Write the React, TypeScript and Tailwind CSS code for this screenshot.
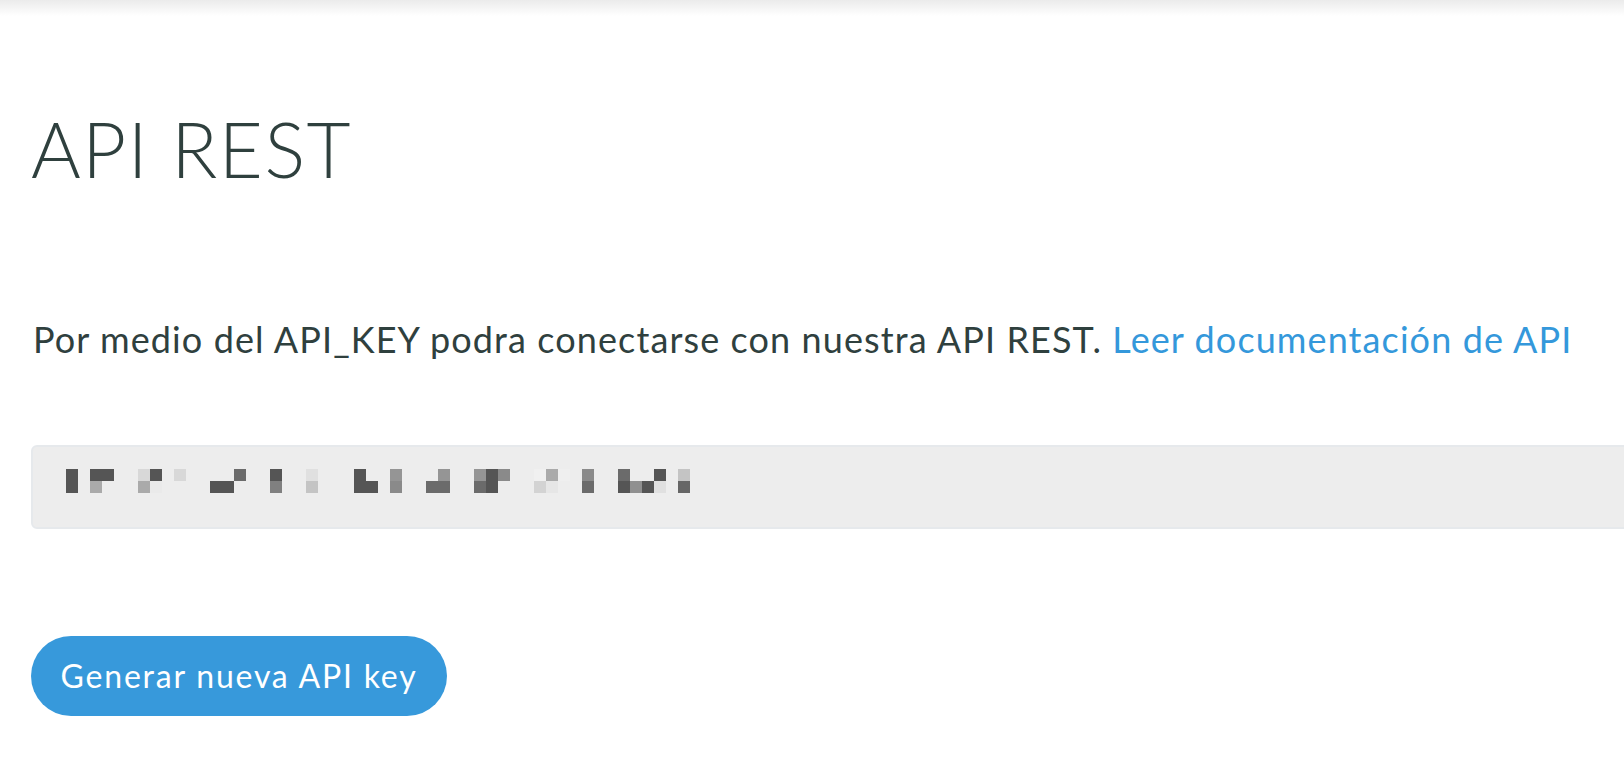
import React from 'react'

// blurred key: [column, row, colour]
const KEY_CELLS: [number, number, string][] = [
  [0, 0, '#555555'], [0, 1, '#555555'],
  [2, 0, '#555555'], [3, 0, '#555555'], [2, 1, '#aaaaaa'],
  [6, 0, '#d8d8d8'], [7, 0, '#555555'], [6, 1, '#aaaaaa'], [7, 1, '#eaeaea'],
  [9, 0, '#d8d8d8'],
  [14, 0, '#6b6b6b'], [12, 1, '#555555'], [13, 1, '#555555'],
  [17, 0, '#555555'], [17, 1, '#808080'],
  [20, 0, '#e0e0e0'], [20, 1, '#c4c4c4'],
  [24, 0, '#555555'], [24, 1, '#555555'], [25, 1, '#555555'],
  [27, 0, '#959595'], [27, 1, '#8a8a8a'],
  [31, 0, '#959595'], [30, 1, '#6b6b6b'], [31, 1, '#6b6b6b'],
  [34, 0, '#959595'], [35, 0, '#555555'], [36, 0, '#8a8a8a'],
  [34, 1, '#6b6b6b'], [35, 1, '#555555'],
  [39, 0, '#f0f0f0'], [40, 0, '#aaaaaa'], [41, 0, '#efefef'],
  [39, 1, '#d3d3d3'], [40, 1, '#e6e6e6'],
  [43, 0, '#8a8a8a'], [43, 1, '#6b6b6b'],
  [46, 0, '#6b6b6b'], [49, 0, '#555555'], [51, 0, '#c4c4c4'],
  [46, 1, '#555555'], [47, 1, '#909090'], [48, 1, '#555555'], [49, 1, '#e0e0e0'], [51, 1, '#666666'],
]

function BlurredKey() {
  const rows = [0, 1].map((r) => {
    const cells: (string | null)[] = Array(52).fill(null)
    KEY_CELLS.filter((c) => c[1] === r).forEach(([k, , color]) => (cells[k] = color))
    return cells
  })
  return (
    <div className="flex flex-col">
      {rows.map((cells, r) => (
        <div key={r} className="flex">
          {cells.map((color, k) => (
            <div key={k} className="w-[12px] h-[12px]" style={color ? { backgroundColor: color } : undefined} />
          ))}
        </div>
      ))}
    </div>
  )
}

export default function App() {
  return (
    <div className="min-h-screen bg-white overflow-hidden font-['Lato',sans-serif] text-[#2f403e]">
      <div className="h-[16px] bg-linear-to-b from-[#ebebeb] to-white" />

      <div className="pl-[31px]">
        <h1 className="mt-[87px] text-[76px] leading-[91px] font-light tracking-[1.5px]">API REST</h1>

        <p className="mt-[118px] text-[36px] leading-[54px] pl-[2px] tracking-[1.1px]">
          Por medio del API_KEY podra conectarse con nuestra API REST.{' '}
          <a href="#" className="text-[#3498db]">Leer documentación de API</a>
        </p>

        <div className="mt-[79px] w-[1700px] h-[84px] bg-[#ededed] border-2 border-[#e6e9ec] rounded-[6px] pl-[33px] pt-[22px]">
          <BlurredKey />
        </div>

        <button className="mt-[107px] w-[416px] h-[80px] rounded-full bg-[#3799db] text-white text-[32px] tracking-[1.8px] flex items-center justify-center">
          Generar nueva API key
        </button>
      </div>
    </div>
  )
}
